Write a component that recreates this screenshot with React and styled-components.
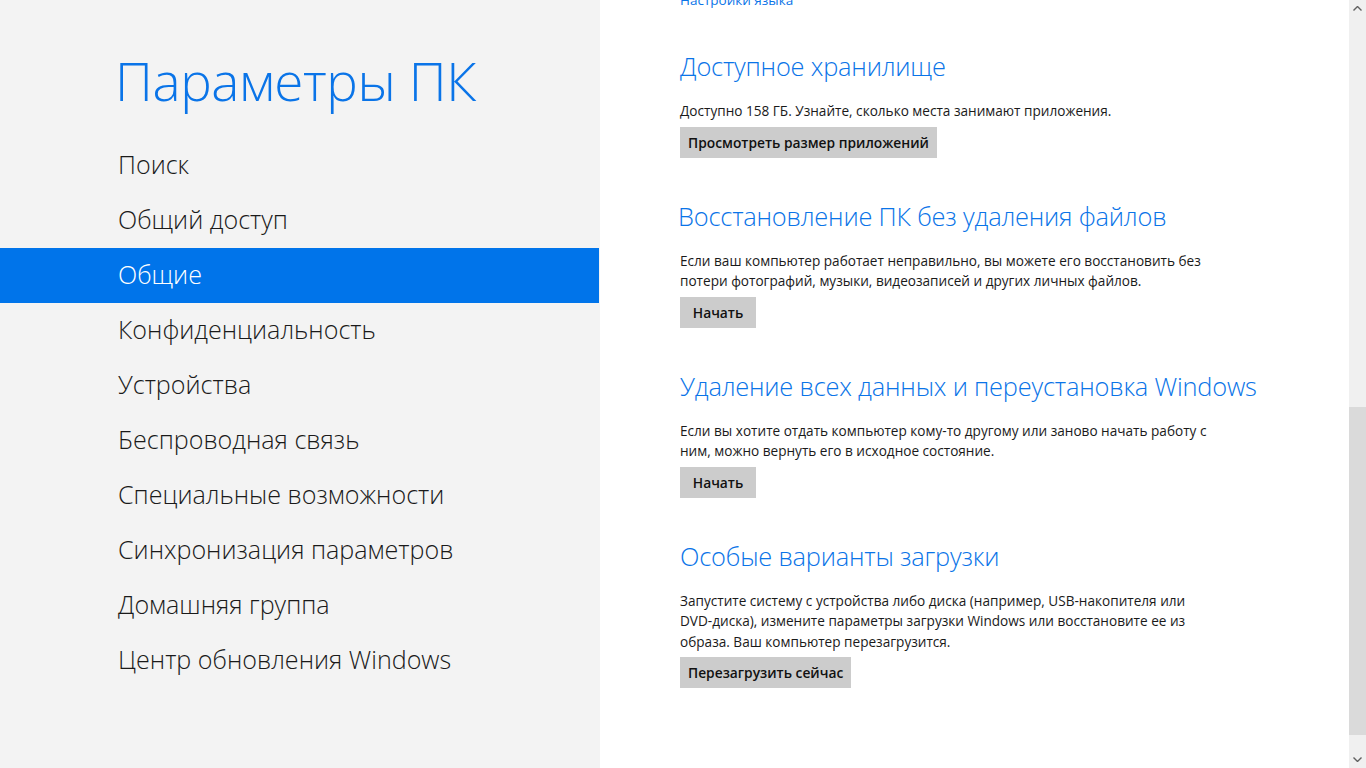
import React from "react";
import styled, { createGlobalStyle } from "styled-components";

const Global = createGlobalStyle`
  html, body { margin: 0; padding: 0; overflow: hidden; }
  body { font-family: "Open Sans", "Noto Sans", sans-serif; }
`;

const Screen = styled.div`
  display: flex;
  width: 1366px;
  height: 768px;
  overflow: hidden;
  background: #ffffff;
`;

const Sidebar = styled.aside`
  width: 600px;
  flex: none;
  background: #f3f3f3;
  display: flex;
  flex-direction: column;
`;

const Title = styled.h1`
  margin: 41px 0 0 115px;
  font-family: "Open Sans", sans-serif;
  font-weight: 300;
  font-size: 53px;
  line-height: 80px;
  color: #0a74e8;
  letter-spacing: -0.4px;
`;

const Nav = styled.nav`
  display: flex;
  flex-direction: column;
  margin-top: 17px;
`;

const NavItem = styled.div`
  height: 55px;
  display: flex;
  align-items: center;
  padding-left: 118px;
  padding-bottom: 3px;
  font-family: "Open Sans", sans-serif;
  font-weight: 300;
  font-size: 25.1px;
  color: ${(p) => (p.$active ? "#ffffff" : "#1a1a1a")};
  background: ${(p) => (p.$active ? "#0074ea" : "transparent")};
  width: 599px;
  box-sizing: border-box;
`;

const Main = styled.main`
  flex: 1;
  position: relative;
  overflow: hidden;
`;

const Content = styled.div`
  margin-top: -10px;
  padding-left: 80px;
  display: flex;
  flex-direction: column;
`;

const Link = styled.div`
  font-size: 13.5px;
  line-height: 20px;
  color: #0a74e8;
  margin-bottom: 39px;
`;

const Section = styled.section`
  display: flex;
  flex-direction: column;
  align-items: flex-start;
  margin-bottom: 41px;
`;

const Heading = styled.h2`
  margin: 0 0 18px ${(p) => p.$shift || 0}px;
  font-family: "Open Sans", sans-serif;
  font-weight: 300;
  font-size: 25.4px;
  line-height: 34px;
  color: #0a74e8;
  white-space: nowrap;
  letter-spacing: -0.2px;
`;

const Body = styled.p`
  margin: 0 0 5px;
  font-size: 13.6px;
  line-height: 20.5px;
  color: #1a1a1a;
  white-space: nowrap;
`;

const Button = styled.button`
  border: none;
  background: #cccccc;
  font-family: "Open Sans", sans-serif;
  font-weight: 600;
  font-size: 13.8px;
  color: #111;
  height: 31px;
  min-width: 76px;
  padding: 0 8px;
  cursor: pointer;
`;

const Scrollbar = styled.div`
  position: absolute;
  top: 0;
  right: 0;
  width: 17px;
  height: 768px;
  background: #f0f0f0;
  display: flex;
  flex-direction: column;
`;

const Arrow = styled.div`
  height: 17px;
  display: flex;
  align-items: center;
  justify-content: center;
`;

const Track = styled.div`
  flex: 1;
  display: flex;
  flex-direction: column;
  padding-top: 390px;
  padding-bottom: 16px;
`;

const Thumb = styled.div`
  flex: 1;
  background: #dadada;
`;

const Chevron = ({ down }) => (
  <svg width="9" height="5" viewBox="0 0 9 5">
    <path
      d={down ? "M0.5 0.5 L4.5 4.5 L8.5 0.5" : "M0.5 4.5 L4.5 0.5 L8.5 4.5"}
      fill="none"
      stroke="#606060"
      strokeWidth="1.4"
    />
  </svg>
);

const navItems = [
  "Поиск",
  "Общий доступ",
  "Общие",
  "Конфиденциальность",
  "Устройства",
  "Беспроводная связь",
  "Специальные возможности",
  "Синхронизация параметров",
  "Домашняя группа",
  "Центр обновления Windows",
];

const sections = [
  {
    title: "Доступное хранилище",
    lines: ["Доступно 158 ГБ. Узнайте, сколько места занимают приложения."],
    button: "Просмотреть размер приложений",
  },
  {
    title: "Восстановление ПК без удаления файлов",
    shift: -2,
    lines: [
      "Если ваш компьютер работает неправильно, вы можете его восстановить без",
      "потери фотографий, музыки, видеозаписей и других личных файлов.",
    ],
    button: "Начать",
  },
  {
    title: "Удаление всех данных и переустановка Windows",
    lines: [
      "Если вы хотите отдать компьютер кому-то другому или заново начать работу с",
      "ним, можно вернуть его в исходное состояние.",
    ],
    button: "Начать",
  },
  {
    title: "Особые варианты загрузки",
    lines: [
      "Запустите систему с устройства либо диска (например, USB-накопителя или",
      "DVD-диска), измените параметры загрузки Windows или восстановите ее из",
      "образа. Ваш компьютер перезагрузится.",
    ],
    button: "Перезагрузить сейчас",
  },
];

export default function App() {
  return (
    <Screen>
      <Global />
      <Sidebar>
        <Title>Параметры ПК</Title>
        <Nav>
          {navItems.map((n) => (
            <NavItem key={n} $active={n === "Общие"}>
              {n}
            </NavItem>
          ))}
        </Nav>
      </Sidebar>
      <Main>
        <Content>
          <Link>Настройки языка</Link>
          {sections.map((s) => (
            <Section key={s.title}>
              <Heading $shift={s.shift}>{s.title}</Heading>
              <Body>
                {s.lines.map((l, i) => (
                  <React.Fragment key={i}>
                    {l}
                    {i < s.lines.length - 1 && <br />}
                  </React.Fragment>
                ))}
              </Body>
              <Button>{s.button}</Button>
            </Section>
          ))}
        </Content>
        <Scrollbar>
          <Arrow>
            <Chevron />
          </Arrow>
          <Track>
            <Thumb />
          </Track>
          <Arrow>
            <Chevron down />
          </Arrow>
        </Scrollbar>
      </Main>
    </Screen>
  );
}
